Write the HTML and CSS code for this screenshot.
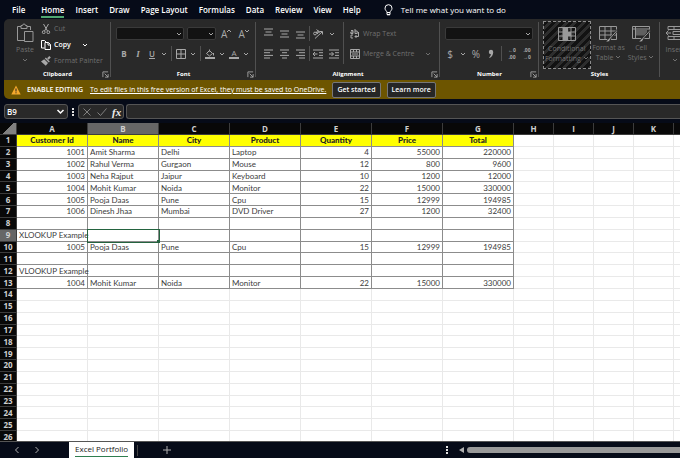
FILE: index.html
```html
<!DOCTYPE html>
<html lang="en">

<head>
    <meta charset="UTF-8">
    <title>Excel Portfolio</title>
    <link rel="stylesheet" href="styles.css">
</head>

<body>
    <svg class="sprite" aria-hidden="true">
        <symbol id="chevron" viewBox="0 0 6 6"><path d="M1 2l2 2 2-2" /></symbol>
        <symbol id="launcher" viewBox="0 0 8 8"><path d="M1 7V1h6M3 3l4 4M7 3.500v3.500H3.500" /></symbol>
        <symbol id="align-left" viewBox="0 0 10 10"><path d="M0 1h9M0 3.700h6M0 6.400h9M0 9h6" /></symbol>
        <symbol id="align-center" viewBox="0 0 10 10"><path d="M0 1h9M2 3.700h5M0 6.400h9M2 9h5" /></symbol>
        <symbol id="align-right" viewBox="0 0 10 10"><path d="M0 1h9M3 3.700h6M0 6.400h9M3 9h6" /></symbol>
        <symbol id="vertical" viewBox="0 0 10 10"><path d="M0 2h9M1.500 5h6M0 8h9" /></symbol>
    </svg>

    <nav class="menu">
        <a href="#">File</a>
        <a href="#" class="active">Home</a>
        <a href="#">Insert</a>
        <a href="#">Draw</a>
        <a href="#">Page Layout</a>
        <a href="#">Formulas</a>
        <a href="#">Data</a>
        <a href="#">Review</a>
        <a href="#">View</a>
        <a href="#">Help</a>
        <button class="tell-me">
            <svg class="bulb" viewBox="0 0 9 12"><path d="M3 8.500C3 7 1 6.500 1 4.200a3.500 3.500 0 0 1 7 0C8 6.500 6 7 6 8.500zM3 10.800h3M3 8.500v2h3v-2" /></svg>
            Tell me what you want to do
        </button>
    </nav>

    <div class="ribbon">
        <section class="group clipboard">
            <div class="tools">
                <button class="big-button paste">
                    <svg class="icon-20" viewBox="0 0 20 20"><path d="M9 17.500H2.500V3.500H6M12 3.500h3.500V7" /><path d="M6 5.500v-3h1.500a1.500 1.500 0 0 1 3 0H12v3z" /><path d="M9.500 8.500h8.500v10H9.500z" /></svg>
                    <span>Paste</span>
                    <svg class="chevron"><use href="#chevron" /></svg>
                </button>
                <div class="stack">
                    <button class="text-button">
                        <svg class="icon-10" viewBox="0 0 10 10"><path d="M2.500 0l4 7M7.500 0l-4 7" /><circle cx="2.700" cy="8.200" r="1.400" /><circle cx="7.300" cy="8.200" r="1.400" /></svg>
                        Cut
                    </button>
                    <button class="text-button enabled">
                        <svg class="icon-10" viewBox="0 0 10 10"><path d="M3.500 8H.5V.5h3L5 2M4 2.500h3.500l2 2v5H4zM7 2.500V5h2.500" /></svg>
                        Copy
                        <svg class="chevron"><use href="#chevron" /></svg>
                    </button>
                    <button class="text-button">
                        <svg class="icon-10 filled" viewBox="0 0 10 10"><path d="M8.300 0l1.500 1.500-2.200 2.200-1.500-1.500z" /><path d="M4.800 1.500l4 4-1 1-4-4z" /><path d="M3.200 3.200l3.800 3.800-2.200 2.800L0 5.500z" /></svg>
                        Format Painter
                    </button>
                </div>
            </div>
            <h2>Clipboard</h2>
            <button class="launcher" aria-label="Clipboard options"><svg><use href="#launcher" /></svg></button>
        </section>

        <section class="group font">
            <div class="rows">
                <div class="row">
                    <label class="combo font-name"><select aria-label="Font" disabled></select><svg class="chevron"><use href="#chevron" /></svg></label>
                    <label class="combo font-size"><select aria-label="Font size" disabled></select><svg class="chevron"><use href="#chevron" /></svg></label>
                    <button class="tool letter">A<svg class="mark" viewBox="0 0 4 4"><path d="M0 3l2-2 2 2" /></svg></button>
                    <button class="tool letter">A<svg class="mark" viewBox="0 0 4 4"><path d="M0 1l2 2 2-2" /></svg></button>
                </div>
                <div class="row font-styles">
                    <button class="tool bold">B</button>
                    <button class="tool italic">I</button>
                    <button class="tool underline">U</button>
                    <svg class="chevron"><use href="#chevron" /></svg>
                    <i class="divider"></i>
                    <button class="tool" aria-label="Borders"><svg class="icon-10" viewBox="0 0 10 10"><path d="M.5.5h9v9h-9zM5 .5v9M.5 5h9" /></svg></button>
                    <svg class="chevron"><use href="#chevron" /></svg>
                    <i class="divider"></i>
                    <button class="tool" aria-label="Fill colour"><svg class="icon-10" viewBox="0 0 10 10"><path d="M4.500.5v2M1.500 4.500l3-3 3 3-3 2.500zM8.500 4v2.500" /><path class="solid" d="M0 8h10v2H0z" /></svg></button>
                    <svg class="chevron"><use href="#chevron" /></svg>
                    <button class="tool font-color">A</button>
                    <svg class="chevron"><use href="#chevron" /></svg>
                </div>
            </div>
            <h2>Font</h2>
            <button class="launcher" aria-label="Font options"><svg><use href="#launcher" /></svg></button>
        </section>

        <section class="group alignment">
            <div class="tools">
                <div class="rows align-rows">
                    <div class="row">
                        <button class="tool up" aria-label="Top align"><svg class="icon-10"><use href="#vertical" /></svg></button>
                        <button class="tool" aria-label="Middle align"><svg class="icon-10"><use href="#vertical" /></svg></button>
                        <button class="tool down" aria-label="Bottom align"><svg class="icon-10"><use href="#vertical" /></svg></button>
                        <i class="divider"></i>
                        <button class="tool" aria-label="Orientation"><svg class="icon-10" viewBox="0 0 10 10"><path d="M2 9.500L9 3M9.500 5.500V2.500H6.500" /><circle cx="2" cy="4.500" r="1.400" /><path d="M3 3l2 2M3.500.5l3.500 3" /><circle cx="5" cy="2.800" r="1" /></svg></button>
                        <svg class="chevron"><use href="#chevron" /></svg>
                    </div>
                    <div class="row">
                        <button class="tool" aria-label="Align left"><svg class="icon-10"><use href="#align-left" /></svg></button>
                        <button class="tool" aria-label="Centre"><svg class="icon-10"><use href="#align-center" /></svg></button>
                        <button class="tool" aria-label="Align right"><svg class="icon-10"><use href="#align-right" /></svg></button>
                        <i class="divider"></i>
                        <button class="tool" aria-label="Decrease indent"><svg class="icon-10" viewBox="0 0 10 10"><path d="M0 1h10M6 3.700h4M6 6.400h4M0 9h10M0 5h4.500M2 3L0 5l2 2" /></svg></button>
                        <button class="tool" aria-label="Increase indent"><svg class="icon-10" viewBox="0 0 10 10"><path d="M0 1h10M6 3.700h4M6 6.400h4M0 9h10M0 5h4.500M2.500 3l2 2-2 2" /></svg></button>
                    </div>
                </div>
                <i class="divider tall"></i>
                <div class="rows wide-rows">
                    <button class="text-button">
                        <svg class="icon-10" viewBox="0 0 10 10"><path d="M1 1.500h2v3H.8V3H3M5 0v4.500h2.200v-2.500H5M3 6H1v3h2M5 7.500h3.500V3M6.500 6L5 7.500 6.500 9" /></svg>
                        Wrap Text
                    </button>
                    <button class="text-button">
                        <svg class="icon-10" viewBox="0 0 10 10"><path d="M.5.5h9v9h-9zM.5 3h9M.5 7h9M3.500 0v3M6.500 0v3M3.500 7v3M6.500 7v3M2 5h6" /></svg>
                        Merge &amp; Centre
                        <svg class="chevron"><use href="#chevron" /></svg>
                    </button>
                </div>
            </div>
            <h2>Alignment</h2>
            <button class="launcher" aria-label="Alignment options"><svg><use href="#launcher" /></svg></button>
        </section>

        <section class="group number">
            <div class="rows">
                <div class="row">
                    <label class="combo number-format"><select aria-label="Number format" disabled></select><svg class="chevron"><use href="#chevron" /></svg></label>
                </div>
                <div class="row number-styles">
                    <button class="tool symbol">$</button>
                    <svg class="chevron"><use href="#chevron" /></svg>
                    <button class="tool symbol">%</button>
                    <button class="tool" aria-label="Comma style"><svg class="icon-10 filled" viewBox="0 0 10 10"><circle cx="5" cy="3" r="2.200" /><path d="M7.200 3c0 3-1.500 5-3.500 6l-.5-.8C4.500 7.300 5 6 5 4z" /></svg></button>
                    <i class="divider"></i>
                    <button class="tool decimals"><span>←0</span><span>.00</span></button>
                    <button class="tool decimals"><span>.00</span><span>→0</span></button>
                </div>
            </div>
            <h2>Number</h2>
            <button class="launcher" aria-label="Number options"><svg><use href="#launcher" /></svg></button>
        </section>

        <section class="group styles">
            <div class="tools">
                <button class="big-button conditional">
                    <svg class="icon-20" viewBox="0 0 20 20"><path d="M1.500 3.500h17v13h-17zM1.500 8h17M1.500 12h17M6 3.500v13M14 3.500v13" /><path class="solid" d="M6 4h5v4h3v4h-3v4H6z" /></svg>
                    <span>Conditional</span>
                    <span>Formatting <svg class="chevron"><use href="#chevron" /></svg></span>
                </button>
                <button class="big-button format-table">
                    <svg class="icon-20" viewBox="0 0 20 20"><path d="M1.500 3.500h17v13h-17zM1.500 8h17M1.500 12h17M7 3.500v13M13 3.500v13" /><path class="brush" d="M19 6.500l-7 8-2 1.500c-.5 1.500-1.500 2-3 2.500 2.500 1 5 .5 5.500-2.500l7-8z" /></svg>
                    <span>Format as</span>
                    <span>Table <svg class="chevron"><use href="#chevron" /></svg></span>
                </button>
                <button class="big-button cell-styles">
                    <svg class="icon-20" viewBox="0 0 20 20"><path d="M1.500 3.500h17v12h-17zM1.500 6h17M4.500 3.500v12" /><path class="shade" d="M5 6.500h11v6H5z" /><path class="brush" d="M19 6.500l-7 8-2 1.500c-.5 1.500-1.500 2-3 2.500 2.500 1 5 .5 5.500-2.500l7-8z" /></svg>
                    <span>Cell</span>
                    <span>Styles <svg class="chevron"><use href="#chevron" /></svg></span>
                </button>
            </div>
            <h2>Styles</h2>
        </section>

        <section class="group cells">
            <div class="tools">
                <button class="big-button insert">
                    <svg class="icon-20" viewBox="0 0 20 20"><path d="M3 3.500h16v3H3zM9 3.500v3M3 13.500h16v3H3zM9 13.500v3M8 8.500h11v3H8zM6 10H1M3.500 7.500L1 10l2.500 2.500" /></svg>
                    <span>Insert</span>
                    <svg class="chevron"><use href="#chevron" /></svg>
                </button>
            </div>
        </section>
    </div>

    <div class="banner">
        <svg class="warning" viewBox="0 0 10 10"><path d="M5 .5L9.700 9.500H.3z" fill="#f4a82c" /><path d="M5 3.500v3M5 7.300v1" stroke="#222" /></svg>
        <strong>ENABLE EDITING</strong>
        <a href="#">To edit files in this free version of Excel, they must be saved to OneDrive.</a>
        <button>Get started</button>
        <button>Learn more</button>
    </div>

    <div class="formula-bar">
        <label class="name-box">
            <select aria-label="Name box"><option>B9</option></select>
            <svg class="chevron big"><use href="#chevron" /></svg>
        </label>
        <i class="dots"></i>
        <div class="fx-box">
            <svg class="fx-icon" viewBox="0 0 10 10"><path d="M1.500 1.500l7 7M8.500 1.500l-7 7" /></svg>
            <svg class="fx-icon" viewBox="0 0 10 10"><path d="M.5 5.500l3 3 6-7" /></svg>
            <button>fx</button>
        </div>
        <input type="text" class="formula" aria-label="Formula">
    </div>

    <main class="sheet">
        <table>
            <thead>
                <tr id="columnHeads"></tr>
            </thead>
            <tbody id="sheetBody"></tbody>
        </table>
    </main>

    <footer class="tabs">
        <button class="arrow" aria-label="Previous sheet"><svg viewBox="0 0 8 8"><path d="M5.500 1l-3 3 3 3" /></svg></button>
        <button class="arrow" aria-label="Next sheet"><svg viewBox="0 0 8 8"><path d="M2.500 1l3 3-3 3" /></svg></button>
        <a href="#" class="tab"><span>Excel Portfolio</span></a>
        <i class="tab-divider"></i>
        <button class="add" aria-label="New sheet"><svg viewBox="0 0 8 8"><path d="M4 0v8M0 4h8" /></svg></button>
        <i class="dots"></i>
        <svg class="scroll-arrow" viewBox="0 0 5 6"><path d="M5 0v6L0 3z" /></svg>
        <div class="scroll-thumb"></div>
    </footer>

    <script src="script.js"></script>
</body>

</html>
```

FILE: styles.css
```css
* {
    box-sizing: border-box;
}

body {
    margin: 0;
    height: 100vh;
    display: flex;
    flex-direction: column;
    overflow: hidden;
    background-color: #060b18;
    color: #fff;
    font-family: "Open Sans", "Noto Sans", sans-serif;
    font-size: 8px;
    line-height: 10px;
}

button,
input,
select {
    font: inherit;
    color: inherit;
    background: none;
    border: none;
    padding: 0;
    margin: 0;
}

a {
    color: inherit;
}

svg {
    flex: none;
    fill: none;
    stroke: currentColor;
    stroke-width: 1;
}

.sprite {
    position: absolute;
    width: 0;
    height: 0;
}

.chevron {
    width: 6px;
    height: 6px;
}

.chevron.big {
    width: 9px;
    height: 9px;
}

.icon-10 {
    width: 10px;
    height: 10px;
}

.icon-20 {
    width: 20px;
    height: 20px;
}

.filled,
.solid {
    fill: currentColor;
    stroke: none;
}

/* Menu */
.menu {
    display: flex;
    flex: none;
    align-items: center;
    gap: 11px;
    height: 19px;
    padding: 1px 12px 0;
    white-space: nowrap;
}

.menu a {
    height: 16px;
    padding-top: 3px;
    font-weight: 600;
    text-decoration: none;
}

.menu .active {
    margin-left: 5px;
    border-bottom: 2px solid #4fa772;
}

.tell-me {
    display: flex;
    align-items: center;
    gap: 8px;
    margin-left: 12px;
}

.bulb {
    width: 9px;
    height: 12px;
}

/* Ribbon */
.ribbon {
    display: flex;
    flex: none;
    height: 61px;
    margin-left: 4px;
    overflow: hidden;
    background-color: #292929;
    border-radius: 5px 0 0 0;
    color: #a8a8a8;
    font-size: 7px;
    white-space: nowrap;
}

.group {
    position: relative;
    flex: none;
    display: flex;
    flex-direction: column;
    padding: 3px 5px 1px;
}

.group::after {
    content: "";
    position: absolute;
    top: 3px;
    right: 0;
    bottom: 3px;
    border-right: 1px solid #505050;
}

.group h2 {
    margin: auto 0 0;
    font-size: 6px;
    line-height: 10px;
    font-weight: 700;
    text-align: center;
    color: #fff;
}

.clipboard {
    width: 107px;
}

.font {
    width: 145px;
}

.alignment {
    width: 184px;
}

.number {
    width: 99px;
}

.styles {
    width: 121px;
    padding: 2px 4px 1px;
}

.cells {
    width: 60px;
}

.launcher {
    position: absolute;
    right: 2px;
    bottom: 2px;
    width: 7px;
    height: 7px;
}

.launcher svg {
    display: block;
    width: 7px;
    height: 7px;
}

.tools {
    display: flex;
}

.big-button {
    display: flex;
    flex-direction: column;
    align-items: center;
    color: #707070;
}

.big-button .icon-20 {
    color: #989898;
}

.paste {
    width: 32px;
    gap: 2px;
    padding-top: 1px;
}

.stack {
    display: flex;
    flex-direction: column;
    gap: 6px;
    padding-top: 2px;
}

.text-button {
    display: flex;
    align-items: center;
    gap: 3px;
    color: #707070;
}

.text-button .icon-10 {
    color: #a8a8a8;
}

.text-button .chevron {
    margin-left: 8px;
}

.enabled,
.text-button.enabled .icon-10 {
    color: #fff;
    font-weight: 600;
}

.rows {
    display: flex;
    flex-direction: column;
    gap: 7px;
    padding-top: 5px;
}

.row {
    display: flex;
    align-items: center;
    gap: 3px;
    height: 13px;
}

.combo {
    position: relative;
    height: 13px;
    background-color: #131313;
    border: 1px solid #3a3a3a;
    border-radius: 2px;
}

.combo select,
.name-box select {
    appearance: none;
    display: block;
    width: 100%;
    height: 100%;
    opacity: 1;
}

.combo .chevron {
    position: absolute;
    top: 3px;
    right: 1px;
}

.font-name {
    width: 70px;
}

.font-size {
    width: 30px;
}

.number-format {
    width: 88px;
}

.tool {
    display: flex;
    align-items: center;
    justify-content: center;
    min-width: 10px;
}

.letter {
    width: 15px;
    font-size: 10px;
    align-items: flex-start;
}

.mark {
    width: 4px;
    height: 4px;
}

.font-styles {
    gap: 4px;
    padding-left: 3px;
}

.bold {
    font-size: 8px;
    font-weight: 700;
}

.italic {
    font-family: "Liberation Serif", serif;
    font-size: 9px;
    font-style: italic;
    font-weight: 700;
}

.underline {
    font-size: 8px;
    text-decoration: underline;
    font-weight: 600;
}

.font-color {
    border-bottom: 2px solid currentColor;
    font-size: 8px;
    line-height: 8px;
}

.divider {
    width: 1px;
    height: 15px;
    background-color: #505050;
}

.divider.tall {
    height: 42px;
    margin-right: 6px;
}

.align-rows {
    width: 82px;
    padding-left: 3px;
}

.align-rows .row {
    gap: 6px;
}

.align-rows .divider {
    margin: 0 -3px;
}

.up {
    align-self: flex-start;
}

.down {
    align-self: flex-end;
}

.wide-rows .text-button {
    height: 13px;
}

.number-styles {
    gap: 5px;
}

.symbol {
    font-size: 10px;
}

.decimals {
    flex-direction: column;
    font-size: 5px;
    line-height: 7px;
    font-weight: 700;
}

.conditional {
    width: 48px;
    height: 48px;
    border: 1px dashed #8c8c8c;
    background: repeating-linear-gradient(135deg, #121212 0 3px, #2d2d2d 3px 6px);
}

.styles .big-button {
    padding-top: 2px;
}

.format-table {
    width: 36px;
}

.cell-styles {
    width: 30px;
}

.brush {
    fill: #b0b0b0;
    stroke: #292929;
}

.shade {
    fill: #606060;
    stroke: none;
}

.insert {
    gap: 2px;
    padding-top: 1px;
}

/* Read-only banner */
.banner {
    display: flex;
    flex: none;
    align-items: center;
    height: 19px;
    margin-left: 4px;
    padding-left: 7px;
    background-color: #6d5500;
    border-radius: 0 0 0 5px;
    font-size: 7px;
    white-space: nowrap;
}

.warning {
    width: 10px;
    height: 10px;
    stroke: none;
}

.banner strong {
    margin: 0 7px 0 6px;
    font-weight: 600;
}

.banner button {
    height: 16px;
    margin-left: 6px;
    padding: 0 4px;
    background-color: #262626;
    border: 1px solid #777;
    border-radius: 2px;
    font-weight: 600;
}

/* Formula bar */
.formula-bar {
    display: flex;
    flex: none;
    align-items: stretch;
    height: 15px;
    margin: 5px 0 4px 4px;
}

.name-box,
.fx-box,
.formula {
    background-color: #292929;
    border: 1px solid #555;
    border-radius: 3px;
}

.name-box {
    position: relative;
    width: 64px;
}

.name-box select {
    padding-left: 2px;
    font-weight: 600;
}

.name-box .chevron {
    position: absolute;
    top: 2px;
    right: 2px;
}

.dots {
    align-self: center;
    width: 2px;
    height: 8px;
    margin: 0 4px;
    background: repeating-linear-gradient(#e0e0e0 0 2px, transparent 2px 3px);
}

.fx-box {
    display: flex;
    align-items: center;
    gap: 5px;
    width: 46px;
    margin-right: 2px;
    padding-left: 3px;
    color: #808080;
}

.fx-icon {
    width: 10px;
    height: 10px;
}

.fx-box button {
    font: italic 700 11px "Liberation Serif", serif;
    color: #f0f0f0;
}

.formula {
    flex: 1;
    min-width: 0;
    border-right: none;
    border-radius: 3px 0 0 3px;
}

/* Worksheet */
.sheet {
    flex: 1;
    min-height: 0;
    overflow: hidden;
    background-color: #fff;
    color: #3c3c3c;
    font-family: Lato, sans-serif;
    font-size: 8px;
    line-height: 10px;
}

.sheet table {
    width: 714px;
    height: calc(100% + 2px);
    table-layout: fixed;
    border-collapse: separate;
    border-spacing: 0;
}

.sheet thead tr {
    height: 12px;
}

.sheet th,
.sheet td {
    padding: 0 2px;
    border-right: 1px solid #e9e9e9;
    border-bottom: 1px solid #e9e9e9;
    white-space: nowrap;
}

.sheet th {
    padding: 0;
    background-color: #080808;
    border-color: #3c3c3c;
    color: #d0d0d0;
    font-family: "Open Sans", sans-serif;
    font-weight: 700;
}

.sheet .corner {
    width: 17px;
    background: linear-gradient(135deg, #080808 50%, #808080 50%);
}

.sheet .data-col {
    width: 71px;
}

.sheet .col {
    width: 40px;
}

.sheet th.current {
    background-color: #666;
}

.sheet td.boxed {
    border-color: #8c8c8c;
}

.sheet td.title {
    background-color: #ff0;
    color: #222;
    font-weight: 900;
    text-align: center;
}

.sheet td.numeric {
    text-align: right;
}

.sheet td.selected {
    position: relative;
    outline: 1px solid #24633f;
}

.sheet td.selected::after {
    content: "";
    position: absolute;
    right: -2px;
    bottom: -2px;
    width: 3px;
    height: 3px;
    background-color: #24633f;
}

/* Sheet tabs */
.tabs {
    display: flex;
    flex: none;
    align-items: center;
    height: 17px;
    padding-left: 13px;
    border-top: 1px solid #555;
    color: #b0b0b0;
}

.tabs button svg {
    display: block;
    width: 8px;
    height: 8px;
}

.arrow {
    margin-right: 12px;
}

.tab {
    align-self: stretch;
    margin-left: 16px;
    padding: 0 6px;
    background-color: #fff;
    color: #222;
    line-height: 14px;
    text-decoration: none;
}

.tab span {
    display: block;
    border-bottom: 1px solid #2f7d4f;
}

.tab-divider {
    width: 1px;
    height: 11px;
    margin-left: 3px;
    background-color: #444;
}

.add {
    margin-left: 25px;
}

.tabs .dots {
    margin: 0 11px 0 auto;
}

.scroll-arrow {
    width: 5px;
    height: 6px;
    margin-right: 3px;
    fill: #b0b0b0;
    stroke: none;
}

.scroll-thumb {
    width: 32%;
    height: 6px;
    background-color: #999;
    border-radius: 3px 0 0 3px;
}
```

FILE: script.js
```javascript
const columns = ['A', 'B', 'C', 'D', 'E', 'F', 'G', 'H', 'I', 'J', 'K', ''];
const rowCount = 26;
const boxedRows = 13;
const boxedColumns = 7;

const sheetData = {
    1: ['Customer Id', 'Name', 'City', 'Product', 'Quantity', 'Price', 'Total'],
    2: [1001, 'Amit Sharma', 'Delhi', 'Laptop', 4, 55000, 220000],
    3: [1002, 'Rahul Verma', 'Gurgaon', 'Mouse', 12, 800, 9600],
    4: [1003, 'Neha Rajput', 'Jaipur', 'Keyboard', 10, 1200, 12000],
    5: [1004, 'Mohit Kumar', 'Noida', 'Monitor', 22, 15000, 330000],
    6: [1005, 'Pooja Daas', 'Pune', 'Cpu', 15, 12999, 194985],
    7: [1006, 'Dinesh Jhaa', 'Mumbai', 'DVD Driver', 27, 1200, 32400],
    9: ['XLOOKUP Example'],
    10: [1005, 'Pooja Daas', 'Pune', 'Cpu', 15, 12999, 194985],
    12: ['VLOOKUP Example'],
    13: [1004, 'Mohit Kumar', 'Noida', 'Monitor', 22, 15000, 330000]
};

const heads = columns.map((name, i) => {
    const width = i < boxedColumns ? 'data-col' : 'col';
    return `<th class="${width}${name === 'B' ? ' current' : ''}">${name}</th>`;
});
document.getElementById('columnHeads').innerHTML = '<th class="corner"></th>' + heads.join('');

let body = '';
for (let row = 1; row <= rowCount; row++) {
    const values = sheetData[row] || [];
    body += `<tr><th class="${row === 9 ? 'current' : ''}">${row}</th>`;
    columns.forEach((name, i) => {
        const value = values[i] === undefined ? '' : values[i];
        const classes = [];
        if (row <= boxedRows && i < boxedColumns) classes.push('boxed');
        if (row === 1 && value) classes.push('title');
        if (typeof value === 'number') classes.push('numeric');
        if (row === 9 && name === 'B') classes.push('selected');
        body += `<td class="${classes.join(' ')}">${value}</td>`;
    });
    body += '</tr>';
}
document.getElementById('sheetBody').innerHTML = body;
```
